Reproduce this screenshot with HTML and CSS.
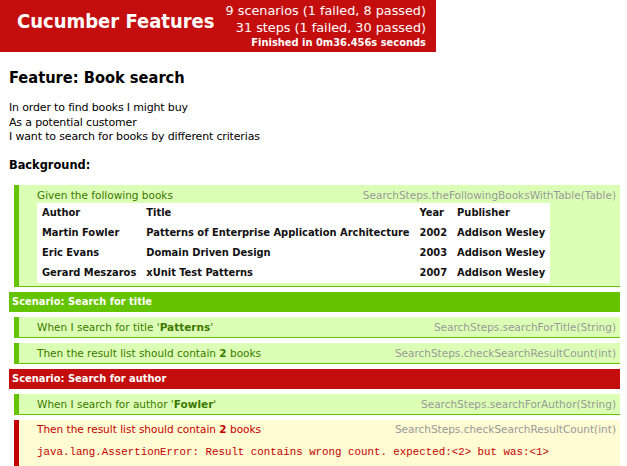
FILE: index.html
```html
<!DOCTYPE html>
<html>
<head>
<meta charset="utf-8">
<link rel="stylesheet" href="styles.css">
</head>
<body>
<div class="header">
  <h1 class="title">Cucumber Features</h1>
  <div class="summary">
    <div>9 scenarios (1 failed, 8 passed)</div>
    <div>31 steps (1 failed, 30 passed)</div>
    <div class="duration">Finished in 0m36.456s seconds</div>
  </div>
</div>
<div class="content">
  <h2 class="feature">Feature: Book search</h2>
  <p class="narrative">In order to find books I might buy<br>As a potential customer<br>I want to search for books by different criterias</p>
  <h3 class="background">Background:</h3>
  <div class="steps">
    <div class="step passed">
      <div class="step-line"><span>Given the following books</span><span class="method">SearchSteps.theFollowingBooksWithTable(Table)</span></div>
      <table class="books">
        <tr><td>Author</td><td>Title</td><td>Year</td><td>Publisher</td></tr>
        <tr><td>Martin Fowler</td><td>Patterns of Enterprise Application Architecture</td><td>2002</td><td>Addison Wesley</td></tr>
        <tr><td>Eric Evans</td><td>Domain Driven Design</td><td>2003</td><td>Addison Wesley</td></tr>
        <tr><td>Gerard Meszaros</td><td>xUnit Test Patterns</td><td>2007</td><td>Addison Wesley</td></tr>
      </table>
    </div>
  </div>
  <div class="scenario-title ok">Scenario: Search for title</div>
  <div class="steps">
    <div class="step passed">
      <div class="step-line"><span>When I search for title '<b>Patterns</b>'</span><span class="method">SearchSteps.searchForTitle(String)</span></div>
    </div>
    <div class="step passed">
      <div class="step-line"><span>Then the result list should contain <b>2</b> books</span><span class="method">SearchSteps.checkSearchResultCount(int)</span></div>
    </div>
  </div>
  <div class="scenario-title bad">Scenario: Search for author</div>
  <div class="steps">
    <div class="step passed">
      <div class="step-line"><span>When I search for author '<b>Fowler</b>'</span><span class="method">SearchSteps.searchForAuthor(String)</span></div>
    </div>
    <div class="step failed">
      <div class="step-line"><span>Then the result list should contain <b>2</b> books</span><span class="method">SearchSteps.checkSearchResultCount(int)</span></div>
      <pre class="error">java.lang.AssertionError: Result contains wrong count. expected:&lt;2&gt; but was:&lt;1&gt;</pre>
    </div>
  </div>
</div>
</body>
</html>
```
FILE: styles.css
```css
html, body {
  margin: 0;
  padding: 0;
  background: #fff;
}
body {
  font-family: "DejaVu Sans", sans-serif;
  font-size: 11px;
  color: #000;
}
.header {
  display: flex;
  width: 436px;
  height: 52px;
  box-sizing: border-box;
  background: #c40d0d;
  color: #fff;
  justify-content: space-between;
  align-items: flex-start;
  padding: 0 10px 0 17px;
  white-space: nowrap;
}
.title {
  margin: 0;
  padding-top: 9px;
  font-family: "DejaVu Sans Condensed", "DejaVu Sans", sans-serif;
  font-stretch: condensed;
  font-size: 20px;
  line-height: 24px;
  font-weight: bold;
}
.summary {
  text-align: right;
  font-size: 12.8px;
  line-height: 16.5px;
  padding-top: 3px;
}
.summary .duration {
  font-family: "DejaVu Sans Condensed", "DejaVu Sans", sans-serif;
  font-stretch: condensed;
  font-size: 11px;
  font-weight: bold;
  line-height: 13px;
}
.content {
  padding: 0 7px 0 9px;
}
.feature {
  margin: 16px 0 0;
  font-family: "DejaVu Sans Condensed", "DejaVu Sans", sans-serif;
  font-stretch: condensed;
  font-size: 16.3px;
  line-height: 20px;
}
.narrative {
  margin: 13px 0 0;
  line-height: 14.5px;
  letter-spacing: -0.16px;
}
.background {
  margin: 11px 0 0;
  font-size: 11.4px;
  line-height: 18px;
}
.steps {
  margin: 11px 0 0 5px;
  display: flex;
  flex-direction: column;
  gap: 5px;
}
.scenario-title + .steps {
  margin-top: 5px;
}
.step {
  border-left: 5px solid #65c400;
  border-bottom: 1px solid #65c400;
  background: #dbffb4;
  color: #3d7700;
  padding: 3px 4px 3px 18px;
  font-size: 10.5px;
}
.step.failed {
  border-left-color: #c20000;
  border-bottom: none;
  background: #fffbd3;
  color: #c20000;
  padding-top: 2px;
  padding-bottom: 10px;
}
.step-line {
  display: flex;
  justify-content: space-between;
  line-height: 14px;
}
.method {
  color: #999;
}
.books {
  border-collapse: collapse;
  background: #fff;
  margin: 1px 0 0;
}
.books td {
  height: 20px;
  padding: 0 5px;
  font-family: "DejaVu Sans Condensed", "DejaVu Sans", sans-serif;
  font-stretch: condensed;
  font-size: 11px;
  font-weight: bold;
  color: #111;
  white-space: nowrap;
}
.scenario-title {
  margin-top: 5px;
  height: 20px;
  line-height: 20px;
  padding-left: 3px;
  color: #fff;
  font-family: "DejaVu Sans Condensed", "DejaVu Sans", sans-serif;
  font-stretch: condensed;
  font-weight: bold;
}
.scenario-title.ok {
  background: #65c400;
}
.scenario-title.bad {
  background: #c40d0d;
}
.error {
  margin: 9px 0 0;
  font-family: "Liberation Mono", monospace;
  font-size: 10.8px;
  line-height: 14px;
  color: #c20000;
}
```
